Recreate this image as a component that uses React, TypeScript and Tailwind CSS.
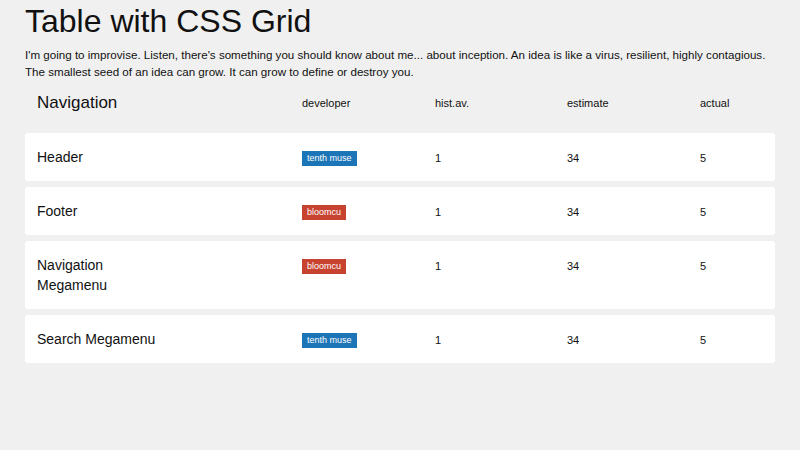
const rows = [
  { name: 'Header', dev: 'tenth muse', color: 'bg-[#1c75b6]' },
  { name: 'Footer', dev: 'bloomcu', color: 'bg-[#c8432f]' },
  { name: 'Navigation Megamenu', dev: 'bloomcu', color: 'bg-[#c8432f]' },
  { name: 'Search Megamenu', dev: 'tenth muse', color: 'bg-[#1c75b6]' },
];

const cols = 'grid grid-cols-[265px_133px_132px_133px_1fr] items-start leading-none';

export default function App() {
  return (
    <div className="min-h-[450px] bg-[#f0f0f0] px-[25px] pt-[2px] text-[#111]" style={{ fontFamily: '"Liberation Sans", Arial, sans-serif' }}>
      <h1 className="text-[32px] leading-[38px]">Table with CSS Grid</h1>
      <p className="mt-[6px] text-[11.6px] leading-[17px]">
        I'm going to improvise. Listen, there's something you should know about me... about inception. An idea is like a virus, resilient, highly contagious. The smallest seed of an idea can grow. It can grow to define or destroy you.
      </p>
      <div className={`${cols} items-center px-3 mt-[14px] h-[30px]`}>
        <div className="text-[17px]">Navigation</div>
        <div className="text-[11px] pt-[4px]">developer</div>
        <div className="text-[11px] pt-[4px]">hist.av.</div>
        <div className="text-[11px] pt-[4px]">estimate</div>
        <div className="text-[11px] pt-[4px]">actual</div>
      </div>
      <div className="mt-[9px] flex flex-col gap-[6px]">
        {rows.map((r) => (
          <div key={r.name} className={`${cols} bg-white rounded-[3px] px-3 pt-[14px] pb-[14px] min-h-[48px]`}>
            <div className="text-[14px] leading-[20px] max-w-[120px]">{r.name}</div>
            <div className="pt-[4px]">
              <span className={`${r.color} text-white text-[9px] leading-[15px] px-[5px] inline-block align-top`}>{r.dev}</span>
            </div>
            <div className="text-[11px] pt-[6px]">1</div>
            <div className="text-[11px] pt-[6px]">34</div>
            <div className="text-[11px] pt-[6px]">5</div>
          </div>
        ))}
      </div>
    </div>
  );
}
